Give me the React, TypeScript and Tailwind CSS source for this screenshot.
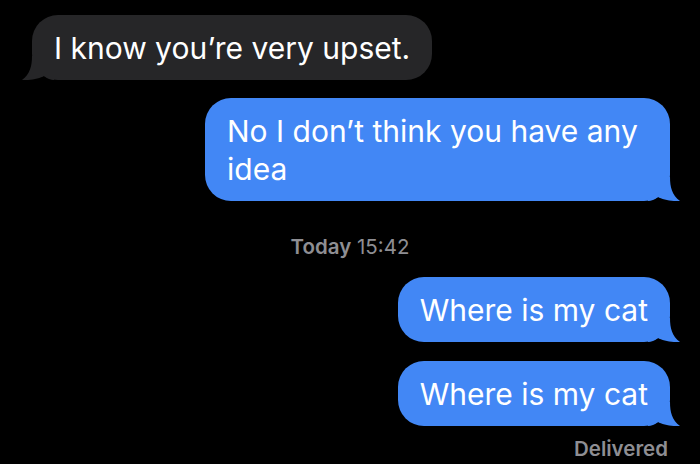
const font = { fontFamily: '"Inter", "Liberation Sans", sans-serif' }

function Tail({ side, color }: { side: 'left' | 'right'; color: string }) {
  const pos = side === 'right' ? 'right-[-12px]' : 'left-[-12px] -scale-x-100'
  return (
    <svg
      className={`absolute bottom-0 ${pos}`}
      width="34"
      height="24"
      viewBox="0 0 34 24"
      fill={color}
    >
      <path d="M0 0H22C22 10 24 18 32 24C26 24.8 14 22.5 10 20C7 22.5 3 24 0 24Z" />
    </svg>
  )
}

function Bubble({ text, mine, wide }: { text: string; mine?: boolean; wide?: boolean }) {
  const color = mine ? '#4287f5' : '#262628'
  return (
    <div className={`relative ${mine ? 'self-end mr-[30px]' : 'self-start ml-[32px]'} ${wide ? 'max-w-[465px]' : ''}`}>
      <div
        className={`relative rounded-[26px] pl-[22px] pr-[22px] py-[13.5px] text-[30px] leading-[38px] text-white ${
          mine ? 'bg-[#4287f5]' : 'bg-[#262628]'
        }`}
      >
        {text}
      </div>
      <Tail side={mine ? 'right' : 'left'} color={color} />
    </div>
  )
}

export default function App() {
  return (
    <div className="w-full h-[464px] bg-black flex flex-col pt-[15px] overflow-hidden" style={font}>
      <Bubble text="I know you’re very upset." />
      <div className="mt-[18px] flex flex-col">
        <Bubble text="No I don’t think you have any idea" mine wide />
      </div>
      <div className="mt-[34px] text-center text-[20.5px] leading-[24px] text-[#8e8e93]">
        <span className="font-semibold">Today</span> 15:42
      </div>
      <div className="mt-[18px] flex flex-col gap-[19px]">
        <Bubble text="Where is my cat" mine />
        <Bubble text="Where is my cat" mine />
      </div>
      <div className="mt-[11px] self-end mr-[32px] text-[20.5px] leading-[24px] font-semibold text-[#8e8e93]">
        Delivered
      </div>
    </div>
  )
}
